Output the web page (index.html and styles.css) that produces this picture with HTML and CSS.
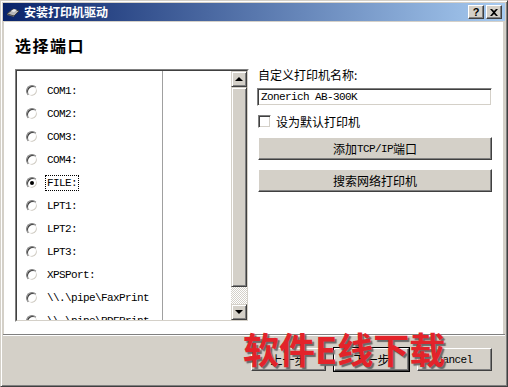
FILE: index.html
```html
<!DOCTYPE html>
<html lang="zh-CN">

<head>
    <meta charset="UTF-8">
    <link rel="stylesheet" href="styles.css">
</head>

<body>
    <div class="window">
        <div class="titlebar">
            <svg class="app-icon" width="16" height="16" viewBox="0 0 16 16">
                <path d="M2 10 L8 5 L14 7 L9 12 Z" fill="#b8b8b8" stroke="#404040" stroke-width="1"/>
                <path d="M2 10 L9 12 L9 13 L2 11 Z" fill="#606060"/>
                <path d="M6 7 L9 5 L12 6 L9 8 Z" fill="#e8e8e8"/>
            </svg>
            <span class="title">安装打印机驱动</span>
            <div class="title-btns">
                <div class="tbtn">?</div>
                <div class="tbtn">
                    <svg width="8" height="7" viewBox="0 0 8 7">
                        <path d="M0 0 L2 0 L4 2 L6 0 L8 0 L5 3.5 L8 7 L6 7 L4 5 L2 7 L0 7 L3 3.5 Z" fill="#000"/>
                    </svg>
                </div>
            </div>
        </div>

        <div class="page">
            <h1 class="heading">选择端口</h1>
            <div class="main">
                <div class="listbox">
                    <div class="listbox-inner">
                        <div class="list-cols">
                            <ul class="ports">
                                <li><span class="radio"></span><span class="port">COM1:</span></li>
                                <li><span class="radio"></span><span class="port">COM2:</span></li>
                                <li><span class="radio"></span><span class="port">COM3:</span></li>
                                <li><span class="radio"></span><span class="port">COM4:</span></li>
                                <li><span class="radio checked"></span><span class="port focus">FILE:</span></li>
                                <li><span class="radio"></span><span class="port">LPT1:</span></li>
                                <li><span class="radio"></span><span class="port">LPT2:</span></li>
                                <li><span class="radio"></span><span class="port">LPT3:</span></li>
                                <li><span class="radio"></span><span class="port">XPSPort:</span></li>
                                <li><span class="radio"></span><span class="port">\\.\pipe\FaxPrint</span></li>
                                <li><span class="radio"></span><span class="port">\\.\pipe\PDFPrint</span></li>
                            </ul>
                            <div class="col-empty"></div>
                        </div>
                        <div class="vscroll">
                            <div class="sbtn"><span class="arrow-up"></span></div>
                            <div class="thumb"></div>
                            <div class="track"></div>
                            <div class="sbtn"><span class="arrow-down"></span></div>
                        </div>
                    </div>
                </div>

                <div class="side">
                    <div class="side-label">自定义打印机名称:</div>
                    <div class="textbox">Zonerich AB-300K</div>
                    <div class="check-row">
                        <span class="checkbox"></span>
                        <span>设为默认打印机</span>
                    </div>
                    <div class="btn side-btn">添加<span class="en">TCP/IP</span>端口</div>
                    <div class="btn side-btn">搜索网络打印机</div>
                </div>
            </div>
        </div>

        <div class="footer">
            <div class="btn nav-btn">上一步</div>
            <div class="btn nav-btn default">下一步</div>
            <div class="btn nav-btn"><span class="en">Cancel</span></div>
        </div>

        <div class="watermark">软件E线下载</div>
    </div>
</body>

</html>
```

FILE: styles.css
```css
/* classic dialog */
body {
    margin: 0;
    background: #d4d0c8;
    font-family: "Noto Sans CJK SC", sans-serif;
    font-size: 12px;
    color: #000;
}

.window {
    position: relative;
    width: 508px;
    height: 387px;
    box-sizing: border-box;
    background: #d4d0c8;
    border: 1px solid;
    border-color: #d4d0c8 #404040 #404040 #d4d0c8;
    box-shadow: inset 1px 1px #fff, inset -1px -1px #808080;
    padding: 2px 2px 0 2px;
    display: flex;
    flex-direction: column;
    overflow: hidden;
}

/* title bar */
.titlebar {
    height: 18px;
    flex: none;
    display: flex;
    align-items: center;
    padding: 0 3px 0 2px;
    background: linear-gradient(to right, #0a246a, #a6caf0);
}

.app-icon {
    flex: none;
}

.title {
    margin-left: 3px;
    color: #fff;
    font-weight: bold;
    line-height: 18px;
}

.title-btns {
    margin-left: auto;
    display: flex;
    gap: 2px;
}

.tbtn {
    width: 16px;
    height: 14px;
    box-sizing: border-box;
    background: #d4d0c8;
    border: 1px solid;
    border-color: #fff #404040 #404040 #fff;
    box-shadow: inset -1px -1px #808080;
    display: flex;
    align-items: center;
    justify-content: center;
    font-family: "Liberation Sans", sans-serif;
    font-weight: bold;
    font-size: 11px;
    line-height: 12px;
}

/* white page */
.page {
    height: 312px;
    flex: none;
    margin: 1px 2px 0 1px;
    background: #fff;
}

.heading {
    margin: 13px 0 0 11px;
    font-size: 16px;
    line-height: 20px;
    letter-spacing: 1.5px;
    font-weight: bold;
}

.main {
    display: flex;
    margin-top: 14px;
    padding-left: 11px;
}

/* port list */
.listbox {
    width: 234px;
    height: 253px;
    box-sizing: border-box;
    border: 1px solid;
    border-color: #808080 #fff #fff #808080;
}

.listbox-inner {
    height: 100%;
    box-sizing: border-box;
    border: 1px solid;
    border-color: #404040 #d4d0c8 #d4d0c8 #404040;
    display: flex;
}

.list-cols {
    flex: 1;
    display: flex;
    background: #fff;
    overflow: hidden;
}

.ports {
    list-style: none;
    margin: 0;
    padding: 8px 0 0 0;
    width: 146px;
    box-sizing: border-box;
    border-right: 1px solid #a0a0a0;
}

.ports li {
    height: 23px;
    display: flex;
    align-items: center;
    padding-left: 9px;
    white-space: nowrap;
}

.radio {
    position: relative;
    width: 12px;
    height: 12px;
    box-sizing: border-box;
    flex: none;
    border-radius: 50%;
    border: 1px solid;
    border-color: #808080 #fff #fff #808080;
    box-shadow: inset 1px 1px #404040, inset -1px -1px #d4d0c8;
    background: #fff;
}

.radio.checked::after {
    content: "";
    position: absolute;
    left: 3px;
    top: 3px;
    width: 4px;
    height: 4px;
    border-radius: 50%;
    background: #000;
}

.port {
    margin-left: 7px;
    font-family: "Liberation Mono", monospace;
    font-size: 11px;
    letter-spacing: -0.6px;
    line-height: 14px;
    padding: 0 1px;
    border: 1px dotted transparent;
}

.port.focus {
    border-color: #000;
}

.col-empty {
    flex: 1;
}

/* scrollbar */
.vscroll {
    width: 16px;
    flex: none;
    display: flex;
    flex-direction: column;
}

.sbtn,
.thumb {
    box-sizing: border-box;
    background: #d4d0c8;
    border: 1px solid;
    border-color: #d4d0c8 #404040 #404040 #d4d0c8;
    box-shadow: inset 1px 1px #fff, inset -1px -1px #808080;
}

.sbtn {
    height: 16px;
    flex: none;
    display: flex;
    align-items: center;
    justify-content: center;
}

.thumb {
    height: 200px;
    flex: none;
}

.track {
    flex: 1;
    background: repeating-conic-gradient(#fff 0 25%, #d4d0c8 0 50%) 0 0 / 2px 2px;
}

.arrow-up {
    width: 0;
    height: 0;
    border-left: 4px solid transparent;
    border-right: 4px solid transparent;
    border-bottom: 4px solid #000;
}

.arrow-down {
    width: 0;
    height: 0;
    border-left: 4px solid transparent;
    border-right: 4px solid transparent;
    border-top: 4px solid #000;
}

/* right side */
.side {
    width: 235px;
    margin-left: 8px;
    display: flex;
    flex-direction: column;
}

.side-label {
    line-height: 12px;
    margin-left: 1px;
}

.textbox {
    margin-top: 7px;
    height: 18px;
    box-sizing: border-box;
    border: 1px solid;
    border-color: #808080 #fff #fff #808080;
    box-shadow: inset 1px 1px #404040, inset -1px -1px #d4d0c8;
    padding-left: 3px;
    font-family: "Liberation Mono", monospace;
    font-size: 11px;
    letter-spacing: -0.6px;
    line-height: 16px;
}

.check-row {
    margin-top: 8px;
    height: 14px;
    display: flex;
    align-items: center;
    gap: 5px;
    padding-left: 1px;
}

.checkbox {
    width: 13px;
    height: 13px;
    box-sizing: border-box;
    border: 1px solid;
    border-color: #808080 #fff #fff #808080;
    box-shadow: inset 1px 1px #404040, inset -1px -1px #d4d0c8;
    background: #fff;
}

.btn {
    height: 23px;
    box-sizing: border-box;
    background: #d4d0c8;
    border: 1px solid;
    border-color: #fff #404040 #404040 #fff;
    box-shadow: inset -1px -1px #808080;
    display: flex;
    align-items: center;
    justify-content: center;
}

.en {
    font-family: "Liberation Mono", monospace;
    font-size: 11px;
    letter-spacing: -0.6px;
}

.side-btn {
    margin: 9px 0 0 1px;
}

/* footer */
.footer {
    flex: 1;
    border-top: 1px solid #808080;
    box-shadow: inset 0 1px #fff;
    display: flex;
    justify-content: flex-end;
    align-items: flex-start;
    gap: 8px;
    padding: 13px 13px 0 0;
}

.nav-btn {
    width: 75px;
}

.nav-btn.default {
    outline: 1px solid #000;
}

.watermark {
    position: absolute;
    left: 242px;
    top: 327px;
    font-size: 36px;
    line-height: 40px;
    font-weight: bold;
    color: #e3232a;
    text-shadow: 2px 2px 1px #6a6a6a;
    white-space: nowrap;
}
```
